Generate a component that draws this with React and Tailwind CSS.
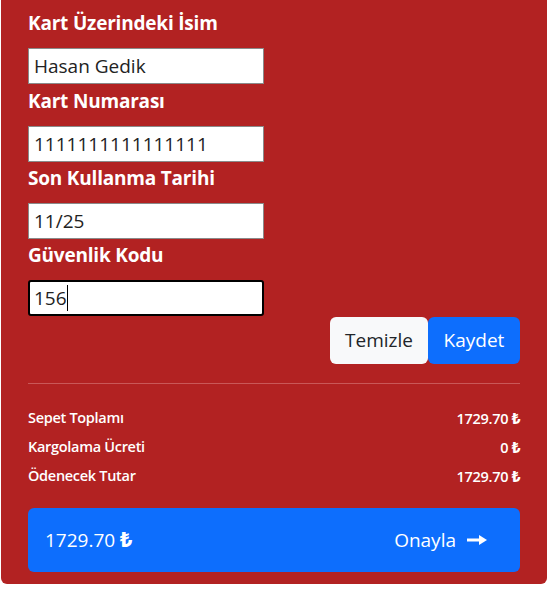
export default function App() {
  const fields = [
    { label: "Kart Üzerindeki İsim", value: "Hasan Gedik" },
    { label: "Kart Numarası", value: "1111111111111111" },
    { label: "Son Kullanma Tarihi", value: "11/25" },
    { label: "Güvenlik Kodu", value: "156", focus: true },
  ];
  const Lira = ({ cls }) => (
    <span className={"font-['Noto_Sans','DejaVu_Sans',sans-serif] font-extrabold " + cls}>₺</span>
  );
  return (
    <div className="w-[552px] h-[589px] bg-white font-['Open_Sans','Noto_Sans',sans-serif]">
      <div className="ml-px w-[546px] bg-[#b22222] rounded-b-md px-[27px] pb-[12px] pt-[11px]">
        {fields.map((f, i) => (
          <div key={i} className={i === 1 ? "mt-[5px]" : i > 1 ? "mt-[4px]" : ""}>
            <div className="h-[24px] leading-[24px] text-[19px] font-bold text-white mb-[13px] tracking-[-0.2px]">
              {f.label}
            </div>
            <div
              className={
                "w-[236px] h-[36px] bg-white flex items-center text-[19px] text-[#222] px-[5px] " +
                (f.focus
                  ? "border-2 border-black rounded-[3px] pl-[4px]"
                  : "border border-[#8a8a8a]")
              }
            >
              <span>{f.value}</span>
              {f.focus && <span className="w-px h-[26px] bg-black" />}
            </div>
          </div>
        ))}
        <div className="flex justify-end mt-px">
          <button className="h-[47px] w-[98px] bg-[#f8f9fa] text-[#212529] text-[19px] rounded-md">
            Temizle
          </button>
          <button className="h-[47px] w-[92px] bg-[#0d6efd] text-white text-[19px] rounded-md">
            Kaydet
          </button>
        </div>
        <div className="mt-[19px] h-px bg-[#c95858]" />
        <div className="mt-[23px] flex flex-col gap-[7px] text-[14.5px] font-semibold text-white tracking-[-0.3px]">
          <div className="flex justify-between h-[22px] items-center">
            <span>Sepet Toplamı</span>
            <span>1729.70 <Lira cls="text-[15px]" /></span>
          </div>
          <div className="flex justify-between h-[22px] items-center">
            <span>Kargolama Ücreti</span>
            <span>0 <Lira cls="text-[15px]" /></span>
          </div>
          <div className="flex justify-between h-[22px] items-center">
            <span>Ödenecek Tutar</span>
            <span>1729.70 <Lira cls="text-[15px]" /></span>
          </div>
        </div>
        <div className="mt-[21px] h-[64px] bg-[#0d6efd] rounded-md flex items-center justify-between pl-[17px] pr-[33px] text-white text-[19px]">
          <span>
            1729.70 <Lira cls="text-[21px]" />
          </span>
          <span className="flex items-center gap-[11px]">
            Onayla
            <svg width="20" height="12" viewBox="0 0 20 12">
              <path d="M0 6 H14" stroke="white" strokeWidth="3" />
              <path d="M12 1 L20 6 L12 11 Z" fill="white" />
            </svg>
          </span>
        </div>
      </div>
    </div>
  );
}
